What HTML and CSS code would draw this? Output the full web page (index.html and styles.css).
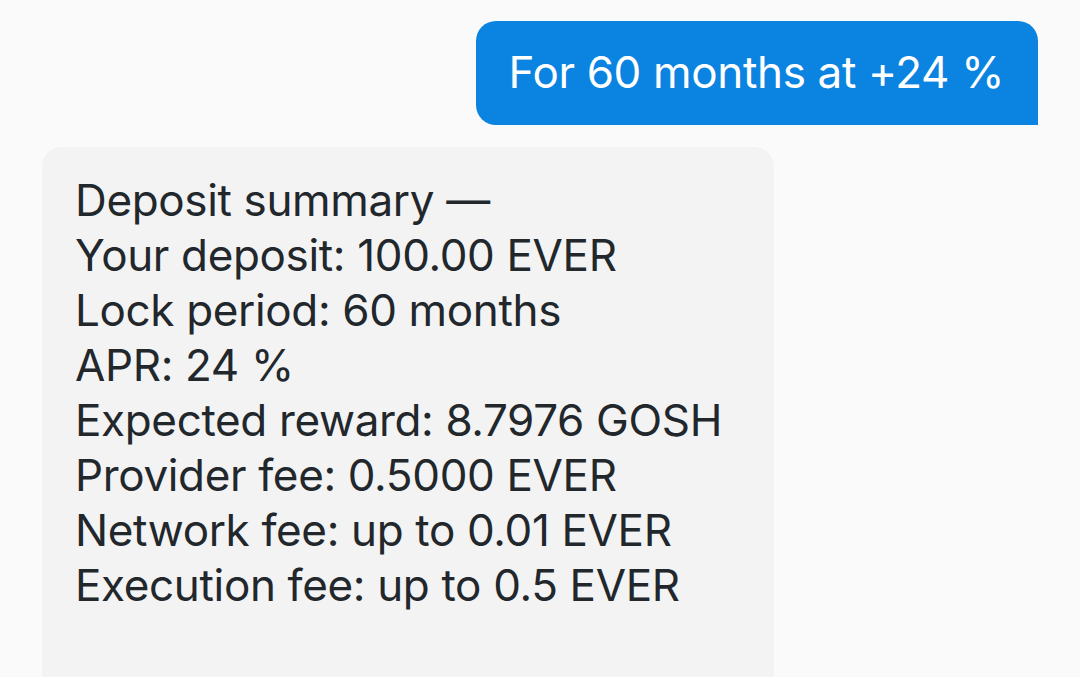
FILE: index.html
```html
<!DOCTYPE html>
<html>
<head>
<meta charset="utf-8">
<link rel="stylesheet" href="styles.css">
</head>
<body>
<div class="chat">
  <div class="row row-out">
    <div class="bubble bubble-out">For 60 months at +24 %</div>
  </div>
  <div class="row row-in">
    <div class="bubble bubble-in">
      <div class="line">Deposit summary —</div>
      <div class="line">Your deposit: 100.00 EVER</div>
      <div class="line">Lock period: 60 months</div>
      <div class="line">APR: 24 %</div>
      <div class="line">Expected reward: 8.7976 GOSH</div>
      <div class="line">Provider fee: 0.5000 EVER</div>
      <div class="line">Network fee: up to 0.01 EVER</div>
      <div class="line">Execution fee: up to 0.5 EVER</div>
    </div>
  </div>
</div>
</body>
</html>
```
FILE: styles.css
```css
html, body {
  margin: 0;
  padding: 0;
  background: #fafafa;
  font-family: "Inter", "Liberation Sans", sans-serif;
  overflow: hidden;
}
.chat {
  display: flex;
  flex-direction: column;
  padding: 21px 42px 0 42px;
  gap: 22px;
}
.row {
  display: flex;
}
.row-out {
  justify-content: flex-end;
}
.bubble {
  font-size: 44px;
  line-height: 55px;
  letter-spacing: -0.35px;
}
.bubble-out {
  background: #0a84e0;
  color: #ffffff;
  padding: 24px 34px 25px 33px;
  border-radius: 20px 20px 0 20px;
}
.bubble-in {
  background: #f3f3f4;
  color: #22272c;
  width: 699px;
  padding: 26px 0 80px 33px;
  border-radius: 20px 20px 20px 0;
}
```
